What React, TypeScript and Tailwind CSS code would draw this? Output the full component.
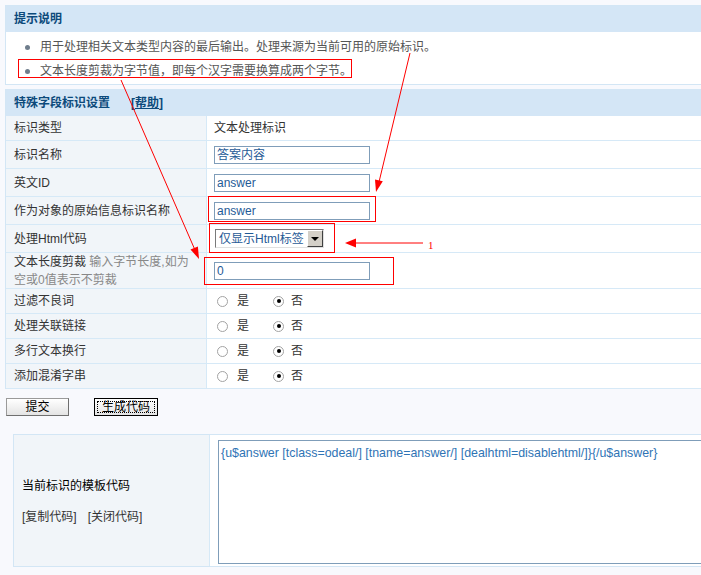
import type { ReactNode } from "react";

const font = { fontFamily: '"Liberation Sans", "Noto Sans CJK SC", sans-serif' };

const Row = ({ label, h, children }: { label: ReactNode; h: string; children?: ReactNode }) => (
  <div className={`flex border-b border-[#d6e9f7] ${h}`}>
    <div className="w-[201px] shrink-0 bg-[#f1f5f9] border-r border-[#d6e9f7] pl-[8px] flex items-center text-[#333]">
      {label}
    </div>
    <div className="flex-1 bg-white pl-[7px] flex items-center">{children}</div>
  </div>
);

const TextInput = ({ value }: { value: string }) => (
  <div className="w-[156px] h-[18px] border border-[#7f9db9] bg-white pl-[2px] flex items-center text-[#1f5a96] leading-none">
    {value}
  </div>
);

const Radio = ({ checked }: { checked?: boolean }) => (
  <span className="w-[11px] h-[11px] rounded-full border border-[#a3a3a3] bg-white flex items-center justify-center">
    {checked && <span className="w-[4px] h-[4px] rounded-full bg-black" />}
  </span>
);

const YesNo = () => (
  <div className="flex items-center ml-[3px] text-[#333]">
    <Radio />
    <span className="ml-[9px]">是</span>
    <span className="ml-[24px]" />
    <Radio checked />
    <span className="ml-[7px]">否</span>
  </div>
);

export default function App() {
  return (
    <div className="relative w-[701px] h-[575px] overflow-hidden bg-[#f8f9fd] text-[12px]" style={font}>
      {/* 提示说明 */}
      <div className="mt-[5px] ml-[5px] w-[720px] border border-[#d3e6f5]">
        <div className="h-[26px] bg-[#d4e6f6] pl-[8px] flex items-center font-bold text-[#0c4a7b]">提示说明</div>
        <div className="bg-white h-[52px] pt-[3px] pb-[1px] pl-[19px] text-[#555]">
          <div className="flex items-center h-[24px]">
            <span className="w-[5px] h-[5px] rounded-full bg-[#6f7d8c]" />
            <span className="ml-[10px]">用于处理相关文本类型内容的最后输出。处理来源为当前可用的原始标识。</span>
          </div>
          <div className="flex items-center h-[24px]">
            <span className="w-[5px] h-[5px] rounded-full bg-[#6f7d8c]" />
            <span className="ml-[10px]">文本长度剪裁为字节值，即每个汉字需要换算成两个字节。</span>
          </div>
        </div>
      </div>

      {/* 特殊字段标识设置 */}
      <div className="mt-[4px] ml-[5px] w-[720px] border-x border-t border-[#d3e6f5]">
        <div className="h-[26px] bg-[#d4e6f6] pl-[8px] flex items-center font-bold text-[#0c4a7b]">
          特殊字段标识设置
          <span className="ml-[21px]">
            [<span className="underline">帮助</span>]
          </span>
        </div>
        <Row label="标识类型" h="h-[25px]">
          <span className="text-[#333]">文本处理标识</span>
        </Row>
        <Row label="标识名称" h="h-[28px]">
          <TextInput value="答案内容" />
        </Row>
        <Row label="英文ID" h="h-[28px]">
          <TextInput value="answer" />
        </Row>
        <Row label="作为对象的原始信息标识名称" h="h-[28px]">
          <TextInput value="answer" />
        </Row>
        <Row label="处理Html代码" h="h-[28px]">
          <div className="ml-[1px] w-[109px] h-[19px] flex items-center border border-t-[#7a7a7a] border-l-[#7a7a7a] border-b-[#e0e0e0] border-r-[#e0e0e0] bg-white">
            <span className="flex-1 pl-[3px] text-[#1f5a96] leading-none">仅显示Html标签</span>
            <span className="w-[16px] h-[17px] bg-[#d4d0c8] border border-t-white border-l-white border-b-[#404040] border-r-[#404040] flex items-center justify-center">
              <span className="w-0 h-0 border-l-[4px] border-r-[4px] border-t-[4px] border-l-transparent border-r-transparent border-t-black" />
            </span>
          </div>
        </Row>
        <Row
          label={
            <div className="flex flex-col leading-[18px]">
              <span>
                文本长度剪裁 <span className="text-[#888]">输入字节长度,如为</span>
              </span>
              <span className="text-[#888]">空或0值表示不剪裁</span>
            </div>
          }
          h="h-[36px]"
        >
          <TextInput value="0" />
        </Row>
        <Row label="过滤不良词" h="h-[25px]">
          <YesNo />
        </Row>
        <Row label="处理关联链接" h="h-[25px]">
          <YesNo />
        </Row>
        <Row label="多行文本换行" h="h-[25px]">
          <YesNo />
        </Row>
        <Row label="添加混淆字串" h="h-[25px]">
          <YesNo />
        </Row>
      </div>

      {/* 按钮 */}
      <div className="mt-[9px] ml-[6px] flex items-center gap-[25px]">
        <button className="w-[63px] h-[18px] border border-[#9a9a9a] border-b-[#6f6f6f] border-r-[#6f6f6f] bg-gradient-to-b from-white to-[#e4e4e4] text-black leading-none">
          提交
        </button>
        <button className="w-[64px] h-[18px] border border-black bg-gradient-to-b from-white to-[#e4e4e4] text-black leading-none p-[2px]">
          <span className="flex items-center justify-center w-full h-full border border-dotted border-black">生成代码</span>
        </button>
      </div>

      {/* 模板代码 */}
      <div className="mt-[18px] ml-[13px] w-[720px] h-[133px] flex border border-[#d3e6f5]">
        <div className="w-[196px] shrink-0 bg-[#f1f5f9] border-r border-[#d6e9f7] pl-[8px] pt-[2px] flex flex-col justify-center">
          <div className="text-black">当前标识的模板代码</div>
          <div className="mt-[13px] text-[#333]">
            [复制代码]<span className="ml-[11px]">[关闭代码]</span>
          </div>
        </div>
        <div className="flex-1 bg-white pl-[8px] pt-[5px]">
          <div className="w-[560px] h-[124px] border border-[#7f9db9] bg-white pl-[2px] pt-[3px] text-[12.4px] text-[#2f74b5]">
            {"{u$answer [tclass=odeal/] [tname=answer/] [dealhtml=disablehtml/]}{/u$answer}"}
          </div>
        </div>
      </div>

      {/* 标注框与箭头 */}
      <div className="absolute left-[18px] top-[59px] w-[334px] h-[19px] border border-[#ff0000]" />
      <div className="absolute left-[208px] top-[196px] w-[168px] h-[26px] border border-[#ff0000]" />
      <div className="absolute left-[209px] top-[223px] w-[126px] h-[30px] border border-[#ff0000]" />
      <div className="absolute left-[204px] top-[257px] w-[190px] h-[28px] border border-[#ff0000]" />
      <svg className="absolute left-0 top-0 pointer-events-none" width="701" height="575">
        <g stroke="#ff0000" strokeWidth="1" fill="none">
          <line x1="121" y1="80" x2="195" y2="250" />
          <line x1="410" y1="53" x2="379" y2="182" />
          <line x1="423" y1="243" x2="354" y2="243" />
        </g>
        <g fill="#ff0000">
          <polygon points="199,259 190.5,249.6 197.9,246.4" />
          <polygon points="376,192 382.8,181.3 375,179.4" />
          <polygon points="345,243 356,238.5 356,247.5" />
        </g>
        <text x="428" y="249" fontSize="11" fill="#ff0000" fontFamily="Liberation Serif, serif">1</text>
      </svg>
    </div>
  );
}
